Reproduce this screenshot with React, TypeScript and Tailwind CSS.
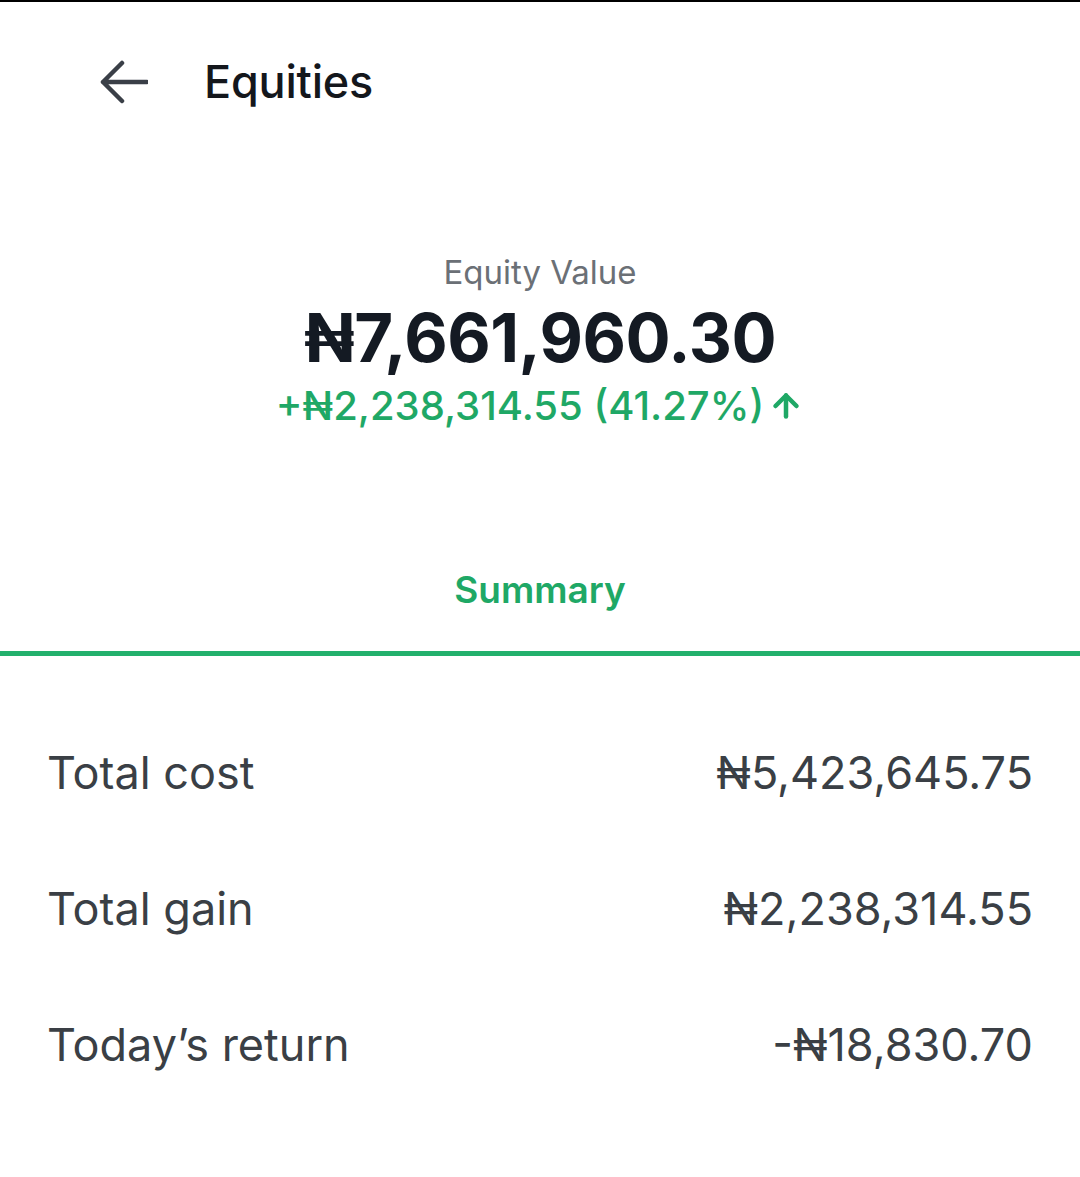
import { ArrowUp } from "lucide-react";

const rows = [
  { label: "Total cost", value: "₦5,423,645.75" },
  { label: "Total gain", value: "₦2,238,314.55" },
  { label: "Today’s return", value: "-₦18,830.70" },
];

export default function App() {
  return (
    <div
      className="w-[1080px] h-[1177px] bg-white border-t-2 border-black overflow-hidden"
      style={{ fontFamily: "Inter, 'Noto Sans', sans-serif" }}
    >
      {/* Header */}
      <div className="flex items-center h-[162px] pb-[2px] pl-[100px]">
        <svg width="48" height="44" viewBox="0 0 48 44" fill="none" className="text-[#3a3f47]">
          <path
            d="M22 3 L3 22 L22 41 M3 22 H47"
            stroke="currentColor"
            strokeWidth="4.5"
            strokeLinecap="round"
            strokeLinejoin="round"
          />
        </svg>
        <h1 className="ml-[56px] text-[45px] font-medium text-[#14171c] tracking-[-0.2px]">
          Equities
        </h1>
      </div>

      {/* Value */}
      <div className="flex flex-col items-center mt-[88px]">
        <p className="text-[33px] text-[#6b7076] leading-[40px]">Equity Value</p>
        <p className="mt-[10px] text-[67px] font-bold text-[#141a23] leading-[72px] tracking-[-0.5px]">
          ₦7,661,960.30
        </p>
        <div className="mt-[8px] flex items-center text-[#1fa866] text-[40px] font-medium leading-[48px]">
          <span>+₦2,238,314.55 (41.27%)</span>
          <ArrowUp size={36} strokeWidth={3} className="ml-[4px]" />
        </div>
      </div>

      {/* Tab */}
      <div className="mt-[138px] flex flex-col items-center">
        <span className="text-[37px] font-semibold text-[#1fa866] leading-[44px]">Summary</span>
      </div>
      <div className="mt-[39px] h-[5px] bg-[#22b06c]" />

      {/* Rows */}
      <div className="pt-[90px] px-[47px] flex flex-col gap-[82px]">
        {rows.map((r) => (
          <div key={r.label} className="flex items-center justify-between h-[54px] text-[45px] text-[#3a3f45] leading-[54px]">
            <span>{r.label}</span>
            <span>{r.value}</span>
          </div>
        ))}
      </div>
    </div>
  );
}
